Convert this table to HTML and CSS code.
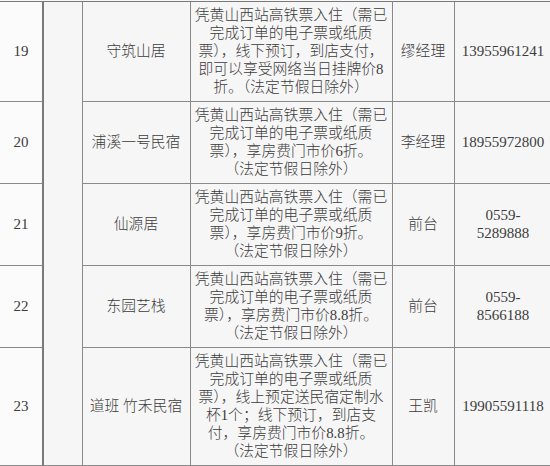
FILE: index.html
```html
<!DOCTYPE html>
<html lang="zh-CN">
<head>
<meta charset="utf-8">
<title>民宿优惠</title>
<link rel="stylesheet" href="styles.css">
</head>
<body>
<table class="sheet">
  <colgroup>
    <col class="c-no">
    <col class="c-blank">
    <col class="c-name">
    <col class="c-desc">
    <col class="c-contact">
    <col class="c-phone">
  </colgroup>
  <tbody>
    <tr>
      <td class="no">19</td>
      <td class="blank" rowspan="5"></td>
      <td>守筑山居</td>
      <td class="desc">凭黄山西站高铁票入住（需已<br>完成订单的电子票或纸质<br>票），线下预订，到店支付，<br>即可以享受网络当日挂牌价8<br>折。（法定节假日除外）</td>
      <td>缪经理</td>
      <td class="phone">13955961241</td>
    </tr>
    <tr>
      <td class="no">20</td>
      <td>浦溪一号民宿</td>
      <td class="desc">凭黄山西站高铁票入住（需已<br>完成订单的电子票或纸质<br>票），享房费门市价6折。<br>（法定节假日除外）</td>
      <td>李经理</td>
      <td class="phone">18955972800</td>
    </tr>
    <tr>
      <td class="no">21</td>
      <td>仙源居</td>
      <td class="desc">凭黄山西站高铁票入住（需已<br>完成订单的电子票或纸质<br>票），享房费门市价9折。<br>（法定节假日除外）</td>
      <td>前台</td>
      <td class="phone">0559-<br>5289888</td>
    </tr>
    <tr>
      <td class="no">22</td>
      <td>东园艺栈</td>
      <td class="desc">凭黄山西站高铁票入住（需已<br>完成订单的电子票或纸质<br>票），享房费门市价8.8折。<br>（法定节假日除外）</td>
      <td>前台</td>
      <td class="phone">0559-<br>8566188</td>
    </tr>
    <tr>
      <td class="no">23</td>
      <td>道班&nbsp;竹禾民宿</td>
      <td class="desc">凭黄山西站高铁票入住（需已<br>完成订单的电子票或纸质<br>票），线上预定送民宿定制水<br>杯1个；线下预订，到店支<br>付，享房费门市价8.8折。<br>（法定节假日除外）</td>
      <td>王凯</td>
      <td class="phone">19905591118</td>
    </tr>
  </tbody>
</table>
</body>
</html>
```

FILE: styles.css
```css
html, body {
  margin: 0;
  padding: 0;
  background: #f7f7f7;
}

.sheet {
  border-collapse: collapse;
  table-layout: fixed;
  width: 552px;
  margin-top: 1px;
  font-family: "Liberation Serif", "Noto Sans CJK SC", serif;
  font-size: 14.8px;
  font-weight: 300;
  line-height: 18px;
  color: #3c3c3c;
  background: #f6f6f6;
}

.c-no { width: 43px; }
.c-blank { width: 39px; }
.c-name { width: 108px; }
.c-desc { width: 202px; }
.c-contact { width: 62px; }
.c-phone { width: 98px; }

.sheet td {
  border: 1px solid #8a8a8a;
  padding: 4px 1px 5px;
  text-align: center;
  vertical-align: middle;
  white-space: nowrap;
}

.sheet tr:first-child td {
  border-top-color: #7a7a7a;
}

.sheet td.no {
  border-left: none;
  background: #fbfbfb;
  font-size: 15px;
}

.sheet td.blank {
  border-left: 2px solid #7a7a7a;
}

.sheet td.phone {
  font-size: 15px;
}
```
